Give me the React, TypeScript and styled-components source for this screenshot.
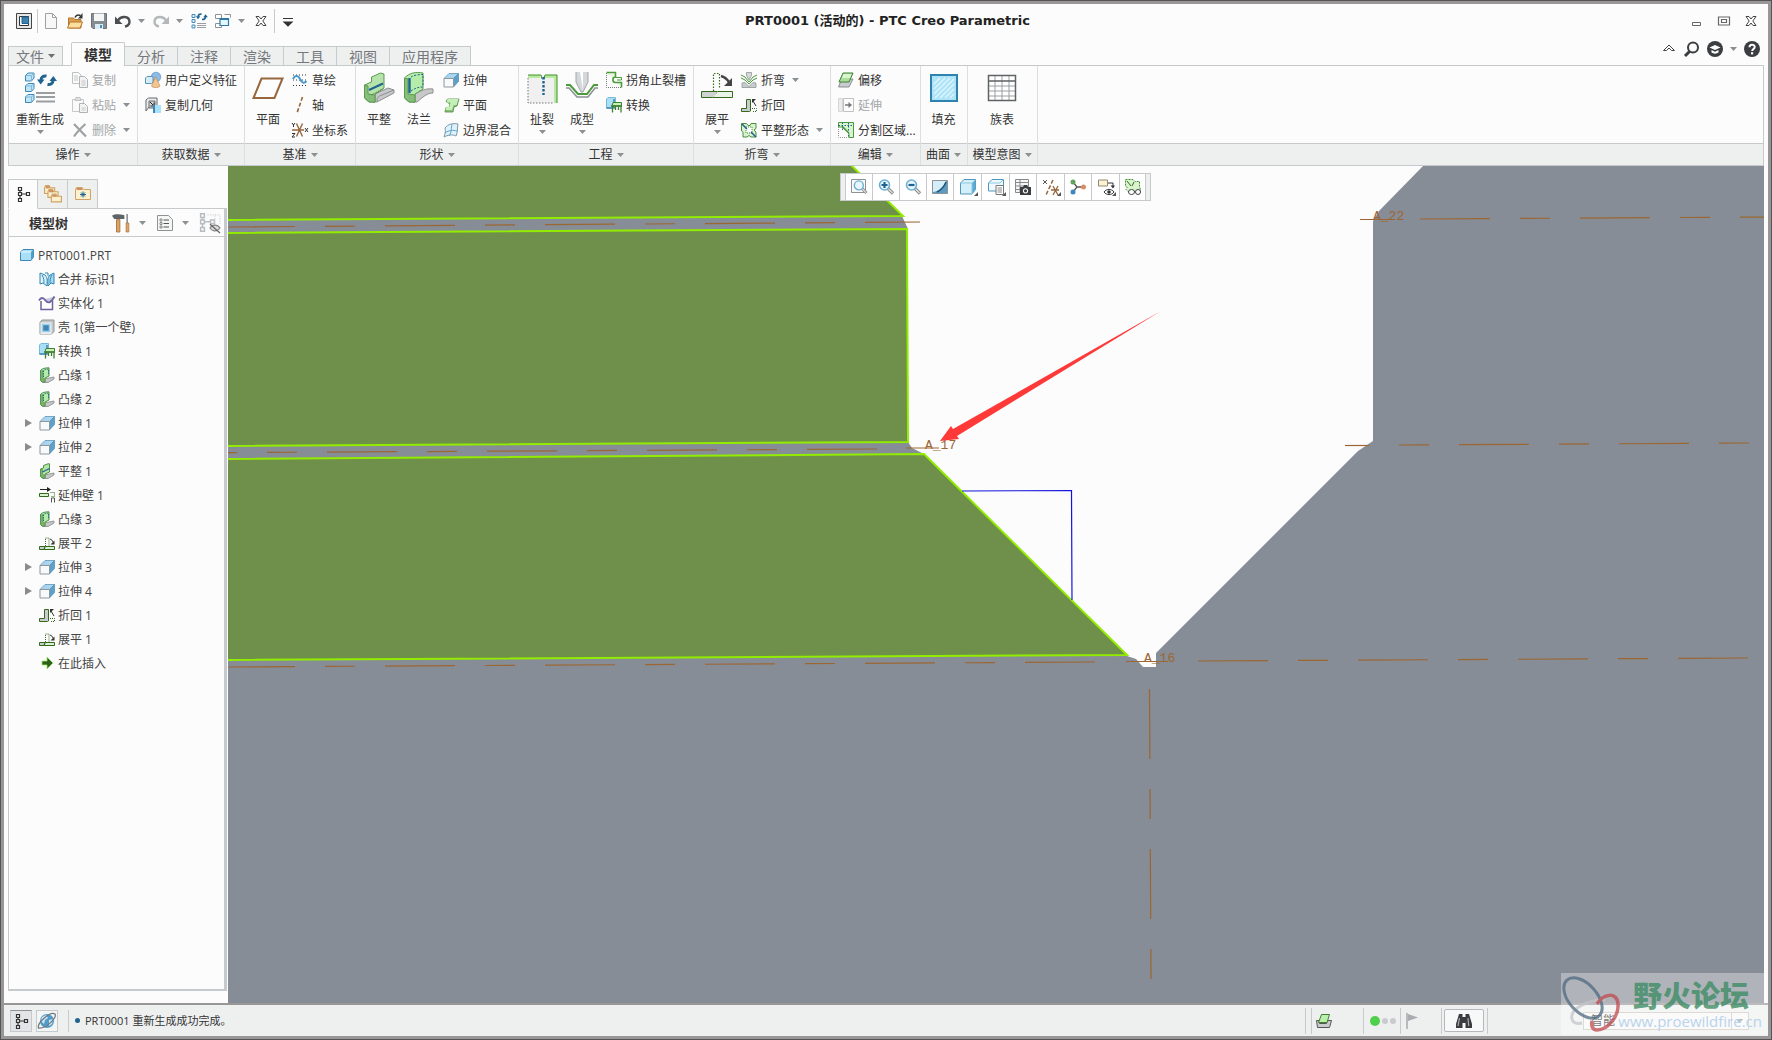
import React from "react";
import styled, { createGlobalStyle, css } from "styled-components";

const c = {
  page: "#fcfcfc",
  bar: "#eef0f0",
  line: "#c6cacd",
  soft: "#dcdfe0",
  text: "#333333",
  muted: "#a3a6a8",
  steel: "#868d96",
  green: "#6f904a",
  edge: "#92ec00",
  axis: "#9c6633",
  blue: "#1f6391",
};

const Global = createGlobalStyle`
  * { box-sizing: border-box; }
  body { margin: 0; background: ${c.page}; }
  body, button, select {
    font-family: "Open Sans", "Noto Sans CJK SC", sans-serif;
    font-size: 12px;
    color: ${c.text};
  }
  button { margin: 0; padding: 0; border: 0; background: none; }
  svg { display: block; flex: none; }
  ul { list-style: none; margin: 0; padding: 0; }
`;

/* ---------- icons ---------- */

const cube = (
  <>
    <path d="M1 6.500 6 1.500h9.500l-5 5z" fill="#a9d4ee" stroke="#5b95b8" strokeWidth=".8" />
    <path d="M10.500 6.500l5-5v8l-5 5.500z" fill="#5e9fc8" stroke="#5b95b8" strokeWidth=".8" />
    <path d="M1 6.500h9.500V15H1z" fill="#f8f9fa" stroke="#8f979c" />
  </>
);
const sphereBox = (x: number, y: number) => (
  <g key={`${x}-${y}`} transform={`translate(${x} ${y})`}>
    <path d="M.5 3 3 .5h6v5L6.500 8.500h-6z" fill="#bfe6f8" stroke="#3f86b3" />
    <path d="M.5 3h6v5.500M6.500 3 9 .5" fill="none" stroke="#7fb9d8" />
  </g>
);
const cycle = (
  <>
    <path d="M2 6C2 3 4.500 1.500 7.500 2" fill="none" stroke={c.blue} strokeWidth="3" />
    <path d="M-2 5.500h7.500L1.700 10.500z" fill={c.blue} />
    <path d="M14 6.500c0 3-2.500 4.500-5.500 4" fill="none" stroke={c.blue} strokeWidth="3" />
    <path d="M18 7h-7.500L14.300 2z" fill={c.blue} />
  </>
);
const lens = (
  <>
    <path d="M10 9.500l5 5" stroke="#8a8a8a" strokeWidth="3.200" />
    <path d="M10.500 10l4 4" stroke="#e4e4e4" strokeWidth="1.200" />
    <circle cx="6.500" cy="6" r="5" fill="#eaf6fd" stroke="#6db0d6" strokeWidth="1.600" />
  </>
);
const treeGlyph = (
  <path
    d="M3.500 1.500h3v3h-3zM3.500 6.500h3v3h-3zM3.500 12.500h3v3h-3zM11.500 6.500h3v3h-3zM5 4.500v2M5 9.500v3M6.500 8h5"
    fill="none"
    stroke="currentColor"
    strokeWidth="1.200"
  />
);
const flange = (
  <>
    <path d="M5 12l10-2v2l-6 3.500H4z" fill="#c6c8ca" stroke="#85898b" strokeWidth=".8" />
    <path d="M1.500 3.500C3 1.500 6 .8 10 .8V9l-4 2v4H3l-1.500-2z" fill="#b5ecaa" stroke="#4f9142" />
    <path d="M1.500 3.500 4 4v7.500l2 1V15H3l-1.500-2z" fill="#79b56c" stroke="#4f9142" strokeWidth=".6" />
    <path d="M4.500 3.500V11M5.500 3c1-.6 2.500-1 4-1v6" stroke={c.blue} strokeDasharray="1.500 1" fill="none" />
  </>
);
const flat = (
  <>
    <path d="M5 12l10-2v2l-6 3.500H4z" fill="#c6c8ca" stroke="#85898b" strokeWidth=".8" />
    <path d="M1.500 6l3-1V2.500L9 .8h1.500V9L6 11v4H3l-1.500-2z" fill="#b5e3ab" stroke="#4f9142" />
    <path d="M1.500 6 3.500 6.500v5l2.500 1V15H3l-1.500-2z" fill="#79b56c" stroke="#4f9142" strokeWidth=".6" />
    <path d="M3.500 9l7-3.500" stroke={c.blue} strokeWidth="1.300" />
  </>
);
const unbend = (
  <>
    <path d="M.5 11.500h5.500l-1 3H.5z" fill="#c9ccce" stroke="#34691c" />
    <path d="M6.500 11.500H15.500v3H5z" fill="#d9f2d3" stroke="#34691c" />
    <path d="M6.500 11V3h3.500v8" fill="none" stroke="#34691c" strokeDasharray="1 1" />
    <path d="M11 4c1.500.5 2.500 1.500 3 3" fill="none" stroke="#333" />
    <path d="M15.500 5.500v4h-4z" fill="#333" />
  </>
);
const bendBack = (
  <>
    <path d="M.5 11.500h5v-9h4V14l-1 .5h-8z" fill="#c9ccce" stroke="#34691c" />
    <path d="M11 11.500h4.500v3H11" fill="none" stroke="#34691c" strokeDasharray="1 1" />
    <path d="M12 4l3 5" stroke="#333" />
    <path d="M11 2h4l-4 4z" fill="#333" />
  </>
);
const convert = (
  <>
    <path d="M.5 2 2 .5h7.500V8L6 11H.5z" fill="#a9e0f7" stroke="#5fa9d3" strokeWidth=".8" />
    <path d="M8 2v9H.5" fill="none" stroke="#3f86b3" strokeWidth="1.500" />
    <path d="M7 5.500h8.500V9H6z" fill="#c5f0b8" stroke="#3f7f32" />
    <path d="M5 9h11M6.500 9v6.500M9.500 9v4M12.500 9v4M15 9v6.500" stroke="#3f7f32" strokeWidth="1.300" />
  </>
);
const xMark = (stroke: string) => (
  <path d="M3 3.500h3l2 2.500 2-2.500h3L9.800 8l3.200 4.500h-3L8 10l-2 2.500H3L6.200 8z" fill="#fff" stroke={stroke} />
);
const folder = (x: number, y: number, w: number, h: number) => (
  <g key={`${x}${y}`}>
    <path d={`M${x} ${y + 2}v${h - 2}h${w}V${y + 2}H${x + w * 0.55}L${x + w * 0.45} ${y}H${x + 1}z`} fill="#fdf1cd" stroke="#d0a265" />
    <path d={`M${x + 1} ${y + 1.5}h${w * 0.4}`} stroke="#cc8f62" strokeWidth="2" />
  </g>
);

const art: Record<string, React.ReactNode> = {
  app: (
    <>
      <path d="M.5.5h15v15H.5z" fill="#e8e8e8" stroke="#444" />
      <path d="M3.500 3.500h9v9h-9z" fill="#fff" stroke="#333" />
      <path d="M6 4h6.500v6.500H6z" fill="#3d7fad" stroke={c.blue} />
    </>
  ),
  file: <path d="M2.500.5h7l4 4v11h-11zM9.500.5v4h4" fill="#f7f7f7" stroke="#9ea1a3" />,
  open: (
    <>
      <path d="M1.500 5h5l1 1.500H14v8.500H1.500z" fill="#d9a054" stroke="#b9762c" />
      <path d="M.5 15 3 9h12.500L13 15z" fill="#fbdf9f" stroke="#b9762c" />
      <path d="M8 4.500C9 2 11 1.500 13.500 2.500" fill="none" stroke="#333" strokeWidth="1.500" />
      <path d="M15.500 0v5.500H11z" fill="#333" />
    </>
  ),
  save: (
    <>
      <path d="M.5.5h15v15H2l-1.500-1.500z" fill="#868d92" stroke="#6d7376" />
      <path d="M3 .5h10v7.500H3z" fill="#f4f5f5" />
      <path d="M4 11h8v5H4z" fill="#dcecf5" />
      <path d="M9 12h2v3H9z" fill="#4a8fb8" />
    </>
  ),
  undo: (
    <>
      <path d="M3 7.500C6 2.500 14 3 14.500 8.500c0 2.500-2 4.500-4.500 5" fill="none" stroke="#4b4f52" strokeWidth="2.400" />
      <path d="M0 3.500v7.500h7.500z" fill="#4b4f52" />
    </>
  ),
  redo: (
    <>
      <path d="M13 7.500C10 2.500 2 3 1.500 8.500c0 2.500 2 4.500 4.500 5" fill="none" stroke="#b4b8ba" strokeWidth="2.400" />
      <path d="M16 3.500v7.500H8.500z" fill="#b4b8ba" />
    </>
  ),
  regenSmall: (
    <>
      <path d="M1 1.500h3v3H1zM1 6.500h3v3H1zM1 12h3v3H1z" fill="#d7effa" stroke="#4b8fb9" />
      <path d="M6 10.500h9M6 12.500h9M6 14.500h9" stroke="#9a9ea0" />
      <g transform="translate(6 0) scale(.6)">{cycle}</g>
    </>
  ),
  windows: (
    <>
      <path d="M.5 1.500h6v4h-6zM9.500 1.500h6v3M.5 10.500h6v4h-6z" fill="#fff" stroke="#8e9295" />
      <path d="M5 5.500h8.500v7H5z" fill="#e6f6fd" stroke="#2f79a8" strokeWidth="1.200" />
      <path d="M5 6h8.500" stroke="#2f79a8" strokeWidth="2" />
    </>
  ),
  closeX: xMark("#444"),
  more: <path d="M3 5.500h10M4 9h8l-4 4z" stroke="#333" strokeWidth="1.200" fill="#333" />,
  min: <path d="M3.500 9.500h8v3h-8z" fill="#fff" stroke="#666" />,
  max: <path d="M2.500 4h11v8h-11zM5.500 6.500h5v3h-5z" fill="#fff" stroke="#666" strokeWidth="1.200" />,
  up: <path d="M2.500 9.500 8 4l5.500 5.500h-3L8 7l-2.500 2.500z" fill="#fff" stroke="#444" />,
  search: (
    <>
      <circle cx="9" cy="6.500" r="5" fill="none" stroke="#3b3e40" strokeWidth="2" />
      <path d="M5.500 10.500l-4.500 4.500" stroke="#3b3e40" strokeWidth="3" />
    </>
  ),
  learn: (
    <>
      <circle cx="8" cy="8" r="8" fill="#3b3e40" />
      <path d="M2.500 6.500 8 4l5.500 2.500L8 9zM4.500 9v2.500c2 1.500 5 1.500 7 0V9L8 10.800z" fill="#fff" />
    </>
  ),
  help: (
    <>
      <circle cx="8" cy="8" r="8" fill="#3b3e40" />
      <path d="M5.500 6.200C5.500 3 10.700 3 10.700 6c0 2-2.500 2-2.500 4" fill="none" stroke="#fff" strokeWidth="2" />
      <path d="M7 11.200h2.200v2.200H7z" fill="#fff" />
    </>
  ),
  regen: (
    <>
      {sphereBox(1, 0.5)}
      {sphereBox(1, 11)}
      {sphereBox(1, 22)}
      <g transform="translate(15 2)">{cycle}</g>
      <path d="M12 21h19M12 25h19M12 29.500h19" stroke="#9a9ea0" strokeWidth="2" />
    </>
  ),
  copy: (
    <>
      <path d="M.5.5h6l2.500 2.500v8.500H.5z" fill="#fafafa" stroke="#bfc2c3" />
      <path d="M7.500 4.500h5l3 3v8h-8z" fill="#f3f3f3" stroke="#b0b3b5" />
      <path d="M2 4h4M2 6h4M2 8h4M9.500 9h4M9.500 11h4M9.500 13h4" stroke="#c4c7c9" />
    </>
  ),
  paste: (
    <>
      <path d="M.5 2.500h11v12H.5z" fill="#fafafa" stroke="#c6c9ca" />
      <path d="M3 3.500h6l-1-3H4z" fill="#e0e2e3" stroke="#bfc2c3" />
      <path d="M7.500 6.500h5l3 3v6h-8z" fill="#f3f3f3" stroke="#b0b3b5" />
      <path d="M9.500 11h4M9.500 13h4" stroke="#c4c7c9" />
    </>
  ),
  del: <path d="M2 2l12 12.500M13.500 2C9 6 5 10 2 14.500" stroke="#9fa2a4" strokeWidth="2.200" fill="none" />,
  udf: (
    <>
      <circle cx="11" cy="5" r="4.800" fill="#8dbbe6" stroke="#5588bb" strokeWidth=".6" />
      <path d="M.5 6 2 4.500h6V10l-1.500 1.500h-6z" fill="#d4ecf7" stroke="#5b95b8" />
      <path d="M10.500 5l-4 9c1 2 7 2 8.500 0z" fill="#f2c694" stroke="#c78746" strokeWidth=".7" />
    </>
  ),
  copyGeom: (
    <>
      <path d="M1 3l2.500-2H12v9H4l-3 4z" fill="#eceeef" stroke="#63686b" />
      <path d="M4 4h6v7H4z" fill="#d5d8da" stroke="#63686b" />
      <path d="M5 5l3.500 3.500M9 5.500V9H5.500" stroke="#222" fill="none" />
      <path d="M8 8h8v8H8z" fill="#a8e2fa" />
      <path d="M8 8h2v8H8z" fill="#3f86b3" />
    </>
  ),
  plane: <path d="M9.500 6.500h21l-8 19.500h-21z" fill="#fdfdfd" stroke="#96663c" strokeWidth="2" />,
  sketch: (
    <>
      <path d="M1 3h14M1 8h14M1 13.500h14" stroke="#333" strokeWidth="1" strokeDasharray="1 2" />
      <path d="M1 7C3 3 6 3 8 7s4 5 6.500 2" fill="none" stroke="#4b9bd0" strokeWidth="2" />
    </>
  ),
  axis: <path d="M10.500 0 5 16" stroke="#96663c" strokeWidth="1.600" strokeDasharray="4 2" />,
  csys: (
    <>
      <path d="M0 8h12M4.500 1.500l6 13M10.500 1.500l-6 13" stroke="#96663c" strokeWidth="1.400" />
      <path d="M0 1l1.500 2L3 1M1.500 3v2M13 6l3 4M16 6l-3 4M0 11.500h3L0 15h3" stroke="#333" fill="none" />
    </>
  ),
  flatBig: (
    <>
      <path d="M12 22l13-6 6 2v3l-17 9H9z" fill="#c6c8ca" stroke="#8d9092" />
      <path d="M1.500 13l7-3V5l9-4 3.500 1v14l-9 6v8H6l-4.500-4z" fill="#b5e3ab" stroke="#5d9952" />
      <path d="M1.500 13l3.500 1v8l7 1v7H6l-4.500-4z" fill="#86bd7b" stroke="#5d9952" />
      <path d="M14 29c0-4 2-5 5-6l12-5" fill="none" stroke="#8d9092" />
      <path d="M6 18l14-6.500" stroke={c.blue} strokeWidth="2" />
      <path d="M8 23l12-6" stroke="#3b7f32" strokeDasharray="1 1" />
    </>
  ),
  flangeBig: (
    <>
      <path d="M12 22c5-3 11-6 18-5v4c-6 0-10 4-16 9H9z" fill="#c6c8ca" stroke="#8d9092" />
      <path d="M1.500 6C6 1 13-.5 20 1v16l-8 5v8H6l-4.500-4z" fill="#b5ecaa" stroke="#5d9952" />
      <path d="M1.500 6l3.500 1v15l7 1v7H6l-4.500-4z" fill="#86bd7b" stroke="#5d9952" />
      <path d="M6.500 6v15" stroke={c.blue} strokeWidth="2.400" />
      <path d="M8 5c3-2 8-2.500 12-2.500v12M8 19c4-3 8-4 12-4" fill="none" stroke={c.blue} strokeDasharray="2 1.500" />
    </>
  ),
  extrude: cube,
  planar: (
    <>
      <path d="M3 4.500 4.500 2H16l-2 7-3 1-1 5H2l1-4.500h3l1-3.500z" fill="#8dbb80" stroke="#4b8b3c" strokeWidth=".8" />
      <path d="M4.500 2H15.500l-2 6h-3l-1.500 5H2.500l1-3.500h3l1-4H3.500z" fill="#c3f0b6" />
    </>
  ),
  blend: (
    <>
      <path d="M2 6c3-4 8-5 13-4-1 4 0 8-2 12-4-2-8-1-12 1 1-3 2-6 1-9z" fill="#dff2fb" stroke="#7c97a8" />
      <path d="M9 2c-1 4 0 8-3 12M2 11c4-3 8-3 12-2" fill="none" stroke="#5fa4cb" />
    </>
  ),
  rip: (
    <>
      <path d="M2 3h28v28H2z" fill="#f0f0f0" />
      <path d="M2 3h12v3H2zM19 3h12v28h-3V6h-9z" fill="#b7ea9f" />
      <path d="M2 3h13l1 4M18 7l1-4h12v28" fill="none" stroke="#3f8f2c" />
      <path d="M2 6v25h26" fill="none" stroke="#777" strokeDasharray="1.500 1.500" />
      <path d="M17.500 5v18" stroke={c.blue} strokeWidth="2.400" strokeDasharray="2.500 1.500" />
    </>
  ),
  form: (
    <>
      <path d="M10 0h12v10l-5 10h-2l-5-10z" fill="#d5d8da" />
      <path d="M14 0h3v18z" fill="#fff" />
      <path d="M10 0v10l5 10h2l5-10V0" fill="none" stroke="#a2a6a8" />
      <path d="M0 13h4l8 9h9l7-9h4" fill="none" stroke="#4b9b3c" strokeWidth="2" />
      <path d="M0 16h3l8 9h11l7-9h3" fill="none" stroke="#8b8f92" strokeWidth="1.500" />
    </>
  ),
  relief: (
    <>
      <path d="M.5.5h9V5C6 5 6 10.500 9.500 10.500h6v5" fill="#e8f6e2" stroke="#4b9b3c" strokeWidth="1.600" />
      <path d="M.5 1v14.500H15" fill="none" stroke="#777" strokeDasharray="1 1" />
      <path d="M9.500 5.500h6V8h-4.500" fill="none" stroke="#4b9b3c" />
    </>
  ),
  convert,
  unbendBig: (
    <>
      <path d="M.5 19.500h16c-1 4-3 6-5 6H.5z" fill="#cfd2d3" stroke="#34691c" />
      <path d="M17 19.500h14.500v6H12" fill="#e9f4e6" stroke="#34691c" />
      <path d="M12.500 19V1.500h6V17" fill="none" stroke="#34691c" strokeWidth="1.200" strokeDasharray="1.500 1.500" />
      <path d="M20 4c4 1 6 3 8 6" fill="none" stroke="#444" strokeWidth="2.400" />
      <path d="M31 6v8h-8z" fill="#444" />
    </>
  ),
  bend: (
    <>
      <path d="M5.500.5h5v3L8 8 5.500 3.500z" fill="#d5d8da" stroke="#8f9496" strokeWidth=".8" />
      <path d="M0 3l4 2 4 5 4-5 4-2M0 6l4 2 4 4 4-4 4-2" fill="none" stroke="#4b9b3c" />
      <path d="M1 11v4.500h14V11l-3-.5-4 4-4-4z" fill="#c9ccce" stroke="#8f9496" strokeWidth=".8" />
    </>
  ),
  bendBack,
  flatState: (
    <>
      <path d="M.5 1.500h5l1.500 2h2l1-2h5v5l-2 1.500 2 2v5h-5l-2-1.500-2 1.500h-4v-4.500l-1.500-2L.5 9z" fill="#d8f3cd" stroke="#4b8b3c" />
      <path d="M5 5h6v6H5z" fill="#fff" stroke="#4b8b3c" strokeDasharray="1 1" />
      <path d="M1 2l5 5M10 10l5 5" stroke={c.blue} strokeWidth="1.500" />
    </>
  ),
  offset: (
    <>
      <path d="M3 9l3-2h9l-4 8H.5z" fill="#c9ccce" stroke="#8a8e90" />
      <path d="M5 1h10l-4 9H1z" fill="#a9dd9c" stroke="#3f7f32" />
      <path d="M5.500 2h8l-1.500 4h-8z" fill="#d9f5d0" />
    </>
  ),
  print: (
    <>
      <path d="M.5 7.500h4l-1 3h7l1-3h4l-2 7h-12z" fill="#c9ccce" stroke="#555" />
      <path d="M5.500 1.500h8l-2.500 8H2.500z" fill="#b9f0aa" stroke="#3f7f32" />
    </>
  ),
  extend: (
    <>
      <path d="M.5 1.500h4v13h-4z" fill="#ececec" stroke="#d4d6d7" />
      <path d="M5.500 1.500h10v13h-10z" fill="#fdfdfd" stroke="#bfc2c3" />
      <path d="M7 8h4" stroke="#777" strokeWidth="1.500" />
      <path d="M10.500 5v6l3.500-3z" fill="#777" />
    </>
  ),
  split: (
    <>
      <path d="M.5.5h15v15h-4.500v-4L4 5H.5z" fill="#d9f5d0" stroke="#4b9b3c" />
      <path d="M.5 3.500h15M4.500.5v8M10.500 1v14" stroke={c.blue} strokeDasharray="1.500 1.500" />
      <path d="M4.500 4.500l6.500 6.500" stroke="#4b9b3c" strokeWidth="1.300" />
      <path d="M.5 5v10.500h10" fill="none" stroke="#999" strokeDasharray="1 1" />
    </>
  ),
  fill: (
    <>
      <path d="M3 3h26v26H3z" fill="#aee4f8" stroke="#2d83ad" strokeWidth="2" />
      <path d="M6 12l6-6M6 17 17 6M6 22 22 6M7 26 26 7M12 26l14-14M17 26l9-9M22 26l4-4" stroke="#e0f5fd" strokeWidth="1.200" />
    </>
  ),
  table: (
    <>
      <path d="M2 3h28v26H2z" fill="#fff" />
      <path d="M2 14h28M2 19h28M2 24h28M9 3v26M16 3v26M23 3v26" stroke="#9a9ea0" />
      <path d="M2 9h28M2.500 3.500h27v25h-27z" fill="none" stroke="#5f6366" strokeWidth="1.500" />
    </>
  ),
  tree: treeGlyph,
  folders: (
    <>
      {folder(0.5, 0.5, 9, 7)}
      {folder(3.5, 4, 9, 7)}
      {folder(6.5, 8, 9, 7)}
    </>
  ),
  favorites: (
    <>
      {folder(0.5, 1.5, 15, 12)}
      <path d="M8 5.500v6M5 8.500h6M6 6.500l4 4M10 6.500l-4 4" stroke={c.blue} />
    </>
  ),
  tools: (
    <>
      <path d="M4 5h3v11H4z" fill="#dca368" stroke="#a8733c" strokeWidth=".8" />
      <path d="M0 1.500C3-.5 7 0 11 1v3.500H2z" fill="#5f6467" />
      <path d="M13.500 0v8" stroke="#8f9496" strokeWidth="1.500" />
      <path d="M12.500 8h2.500v8h-2.500z" fill="#dca368" stroke="#a8733c" strokeWidth=".6" />
    </>
  ),
  settings: (
    <>
      <path d="M.5.500h11l4 4v11H.5z" fill="#f4f5f5" stroke="#8e9295" />
      <path d="M6.500 5H12M6.500 8.500H12M6.500 12H12" stroke="#555" />
      <path d="M3 4h2v2H3zM3 7.500h2v2H3zM3 11h2v2H3z" fill="none" stroke="#777" strokeWidth=".8" />
    </>
  ),
  hideTree: (
    <>
      <g color="#b9bdbf" transform="translate(-3 -1)">{treeGlyph}</g>
      <path d="M6 1.500h10M12 2v8M16 2v8" stroke="#d6d8da" strokeDasharray="1 1" />
      <path d="M8 12c2-3 6-3 8 0-2 3-6 3-8 0z" fill="#ddd" stroke="#888" />
      <path d="M8 9l8 7" stroke="#666" />
    </>
  ),
  part: (
    <>
      <path d="M1.500 5 4 2.500h10.500V10L12 13.500H1.500z" fill="#a9e0f7" stroke="#3f86b3" />
      <path d="M12 5v8.500l2.500-3.500V2.500z" fill="#4f9ecb" />
      <path d="M1.500 5H12" stroke="#e6f8ff" />
    </>
  ),
  merge: (
    <>
      <path d="M1 2l5 2c3 3 2 7 2 11l-4-3-3 1z" fill="#dff2fb" stroke="#2f86b3" />
      <path d="M15 2l-4 2c-3 3-2 7-2 11l3-3 3 1z" fill="#a5d9f2" stroke="#2f86b3" />
      <path d="M3 4c2 3 2 6 2 8M13 4c-2 3-2 6-2 8M6 2h3v3" stroke="#2f86b3" fill="none" />
    </>
  ),
  solidify: (
    <>
      <path d="M2 6v8.500h11.500V6" fill="#fff" stroke="#6f629f" strokeWidth="1.500" />
      <path d="M0 5.500c2-3.500 4-3.500 6.500 0s6 2 9-4" fill="#c9ccdc" stroke="#6f629f" strokeWidth="1.800" />
    </>
  ),
  shell: (
    <>
      <path d="M1 3.500 3 1h12v11.500L12.500 15H1z" fill="#c3c7c9" stroke="#8f9496" />
      <path d="M1.500 3.500h11V15h-11z" fill="#eceeef" />
      <path d="M3.500 5.500h7v7h-7z" fill="#3f86b3" stroke="#9ccfe9" strokeWidth="1.500" />
    </>
  ),
  flange,
  flat,
  extendWall: (
    <>
      <path d="M.5 6.500h9v3h-9z" fill="#d8f3cd" stroke="#34691c" />
      <path d="M8 0v5l4-2.500z" fill="#222" />
      <path d="M1 2.500h8" stroke="#222" />
      <path d="M11.500 5.500h4v4h-4" fill="none" stroke="#34691c" strokeDasharray="1 1" />
      <path d="M12.500 11v4.500M15.500 11v4.500M12.500 11h3" stroke="#555" />
    </>
  ),
  unbend,
  insert: <path d="M3 6h5V2l6 6-6 6v-4H3z" fill="#2f5f1c" stroke="#9be86b" strokeWidth=".8" />,
  refit: (
    <>
      <path d="M.5.5h14v13H.5z" fill="#fafafa" stroke="#8e9295" />
      <g transform="translate(2 1) scale(.9)">{lens}</g>
    </>
  ),
  zoomIn: (
    <>
      {lens}
      <path d="M3.500 6h6M6.500 3v6" stroke={c.blue} strokeWidth="2.200" />
    </>
  ),
  zoomOut: (
    <>
      {lens}
      <path d="M3.500 6h6" stroke={c.blue} strokeWidth="2.200" />
    </>
  ),
  repaint: (
    <>
      <path d="M.5 1.500h15v13H.5z" fill="#5b9cc4" stroke="#8e9295" />
      <path d="M1 2h13C12 8 8 12 1 13z" fill="#d5effa" />
      <path d="M14 3C12 8 9 11 5 13" stroke="#1f5577" strokeWidth="1.500" fill="none" />
    </>
  ),
  shade: (
    <>
      <path d="M.5 4 4 .5h11.500v10L12 15H.5z" fill="#d2effa" stroke="#4f95bd" />
      <path d="M12 4v11l3.500-4.500V.5z" fill="#5fa9d3" />
      <path d="M.5 4H12v11" fill="none" stroke="#8fc9e5" />
    </>
  ),
  saved: (
    <>
      <path d="M.5 4 4 .5h11.500v8L12 12H.5z" fill="#eef9fd" stroke="#4f95bd" />
      <path d="M.5 4H12l3.500-3.500" fill="none" stroke="#8fc9e5" />
      <path d="M8 6.500h7.500v9H8z" fill="#fff" stroke="#777" />
      <path d="M9.500 9h4.500M9.500 11h4.500M9.500 13h4.500" stroke="#888" />
    </>
  ),
  camera: (
    <>
      <path d="M.5.5h13v13H.5zM.5 3.500h13M.5 7h13M.5 10.500h13M5 .5v13" fill="#f6f6f6" stroke="#85898b" />
      <path d="M5 8h3l1-2h3l1 2h3v8H5z" fill="#3b3e40" />
      <circle cx="10.500" cy="11.800" r="2.600" fill="#fff" />
      <circle cx="10.500" cy="11.800" r="1.600" fill="#3b3e40" />
    </>
  ),
  datum: (
    <>
      <path d="M0 1l4 4M4 1 0 5" stroke="#555" />
      <path d="M10 1 3 16" stroke="#96663c" strokeWidth="1.500" strokeDasharray="4 2" />
      <path d="M8 11h8M10 7l5 9M15 7l-5 9" stroke="#96663c" strokeWidth="1.300" />
    </>
  ),
  spin: (
    <>
      <path d="M3 3l4 5-4 5M7 8h6" stroke="#555" fill="none" strokeWidth="1.300" />
      <circle cx="3" cy="3" r="2.500" fill="#5fa35c" />
      <circle cx="3" cy="13" r="2.500" fill="#3f86c0" />
      <circle cx="13.500" cy="8" r="2.500" fill="#d98d66" />
    </>
  ),
  annot: (
    <>
      <path d="M.5 1h9v6h-9z" fill="#fdf3cf" stroke="#8d8a7a" />
      <path d="M10 4h5v4" fill="none" stroke="#333" />
      <path d="M12.500 6.500H17L15 9.500z" fill="#333" />
      <path d="M6 13c2.500-3.500 7.500-3.500 10 0-2.500 3.500-7.500 3.500-10 0z" fill="#fff" stroke="#333" />
      <circle cx="11" cy="13" r="1.800" fill="#333" />
    </>
  ),
  flatView: (
    <>
      <path d="M.5.5H8l2 2h4.500v5l1 3v2H3l-2-2 1-2-1.500-2z" fill="#d8f3cd" stroke="#3f8f2c" strokeDasharray="2 1" />
      <path d="M2 2l4 5M9 3 7 7" stroke="#34691c" />
      <path d="M3.500 13a3 2.500 0 1 0 6 0 3 2.500 0 1 0-6 0M10.500 13a2.500 2.500 0 1 0 5 0 2.500 2.500 0 1 0-5 0" fill="#fff" stroke="#444" />
    </>
  ),
  globe: (
    <>
      <circle cx="8" cy="8" r="7" fill="#4f9ccb" />
      <path d="M3 4l4-2 2 3-3 2-1 4-3-3zM10 7l4-1-1 5-3 2z" fill="#cfe6f3" />
      <path d="M-.5 15C-2 10 11-2 16 1c2 4-9 15-16.500 14z" fill="none" stroke="#74797c" strokeWidth="1.300" />
    </>
  ),
  flag: (
    <>
      <path d="M2 0v16" stroke="#a6a9ab" strokeWidth="1.500" />
      <path d="M3 1l10 3.500L3 8z" fill="#a9acae" />
    </>
  ),
  binoculars: (
    <>
      <path d="M3 1h3.500v3h3V1H13l3 10v4h-6.500v-5h-3v5H0v-4z" fill="#3a3d3f" />
      <path d="M3.500 5 2 13M12 5l.7 8" stroke="#aaa" strokeWidth="1.200" />
    </>
  ),
};

const Icon = ({ name, size = 16, grid = 16 }: { name: string; size?: number; grid?: number }) => (
  <svg width={size} height={size} viewBox={`0 0 ${grid} ${grid}`} overflow="visible" aria-hidden="true">
    {art[name]}
  </svg>
);

const Caret = ({ color = "#8b9093" }: { color?: string }) => (
  <svg width="7" height="4" viewBox="0 0 7 4" aria-hidden="true">
    <path d="M0 0h7L3.500 4z" fill={color} />
  </svg>
);

/* ---------- window frame ---------- */

const Frame = styled.div`
  display: flex;
  flex-direction: column;
  min-height: 100vh;
  border: 1px solid #555355;
  background: ${c.page};
  box-shadow: inset 0 0 0 3px #999698;
  padding: 3px;
`;

const TitleBar = styled.header`
  display: grid;
  grid-template-columns: 1fr auto 1fr;
  align-items: center;
  height: 33px;
  padding: 0 9px 0 12px;
`;

const Title = styled.h1`
  margin: 0;
  font: bold 13px/16px "DejaVu Sans", "Noto Sans CJK SC", sans-serif;
  color: #222;
`;

const Quick = styled.div`
  display: flex;
  align-items: center;
  gap: 8px;
`;

const Split = styled.button`
  display: flex;
  align-items: center;
  gap: 7px;
`;

const Rule = styled.span<{ $h: number; $mx?: number }>`
  width: 1px;
  height: ${(p) => p.$h}px;
  margin: 0 ${(p) => p.$mx ?? 0}px;
  background: ${c.line};
`;

const WindowButtons = styled.div`
  display: flex;
  justify-content: flex-end;
  gap: 11px;
`;

/* ---------- ribbon ---------- */

const TabRow = styled.nav`
  display: flex;
  align-items: flex-end;
  height: 28px;
  padding: 0 8px 0 4px;
`;

const Tab = styled.button<{ $active?: boolean }>`
  height: 19px;
  padding: 0 12px;
  border: 1px solid ${c.line};
  border-width: 1px 1px 0 0;
  background: ${c.bar};
  color: #74777b;
  font-size: 14px;
  line-height: 15px;
  white-space: nowrap;
  ${(p) =>
    p.$active &&
    css`
      position: relative;
      height: 24px;
      margin-bottom: -1px;
      border-width: 1px 1px 0 1px;
      border-radius: 2px 2px 0 0;
      background: ${c.page};
      color: #333;
      font-weight: bold;
      line-height: 20px;
    `}
`;

const FileTab = styled(Tab)`
  display: flex;
  align-items: center;
  gap: 4px;
  padding: 0 7px 0 7px;
  margin-right: 8px;
  border-left-width: 1px;
`;

const TabTools = styled.div`
  display: flex;
  align-items: center;
  gap: 7px;
  margin: 0 0 8px auto;
`;

const Ribbon = styled.section`
  display: flex;
  margin: 0 4px;
  border: 1px solid ${c.line};
`;

const Group = styled.div<{ $fill?: boolean }>`
  display: flex;
  flex-direction: column;
  flex: ${(p) => (p.$fill ? "1" : "none")};
  border-right: ${(p) => (p.$fill ? "0" : `1px solid ${c.soft}`)};
`;

const GroupBody = styled.div`
  display: flex;
  justify-content: center;
  height: 77px;
  padding: 0 3px;
`;

const GroupLabel = styled.button`
  display: flex;
  align-items: center;
  justify-content: center;
  gap: 4px;
  height: 22px;
  padding: 0 5px;
  border-top: 1px solid ${c.line};
  background: ${c.bar};
  line-height: 16px;
`;

const Large = styled.button<{ $wide?: boolean }>`
  display: flex;
  flex-direction: column;
  align-items: center;
  width: ${(p) => (p.$wide ? 56 : 40)}px;
  padding-top: 6px;
  white-space: nowrap;
  span {
    margin: 8px 0 2px;
    line-height: 16px;
  }
`;

const Stack = styled.div`
  display: flex;
  flex-direction: column;
  gap: 1px;
  padding-top: 2px;
`;

const Small = styled.button<{ $tight?: boolean }>`
  display: flex;
  align-items: center;
  gap: 4px;
  height: 24px;
  padding: 0 ${(p) => (p.$tight ? 1 : 4)}px 0 4px;
  white-space: nowrap;
  &:disabled {
    color: ${c.muted};
  }
  svg:nth-of-type(2) {
    margin-left: 3px;
  }
`;

type SmallItem = [icon: string, label: string, flags?: string];
type LargeItem = [icon: string, label: string, caret?: boolean];
interface GroupData {
  label: string;
  large?: LargeItem[];
  small?: SmallItem[];
}

const groups: GroupData[] = [
  {
    label: "操作",
    large: [["regen", "重新生成", true]],
    small: [
      ["copy", "复制", "off"],
      ["paste", "粘贴", "off menu"],
      ["del", "删除", "off menu"],
    ],
  },
  { label: "获取数据", small: [["udf", "用户定义特征"], ["copyGeom", "复制几何"]] },
  {
    label: "基准",
    large: [["plane", "平面"]],
    small: [["sketch", "草绘"], ["axis", "轴"], ["csys", "坐标系"]],
  },
  {
    label: "形状",
    large: [["flatBig", "平整"], ["flangeBig", "法兰"]],
    small: [["extrude", "拉伸"], ["planar", "平面"], ["blend", "边界混合"]],
  },
  {
    label: "工程",
    large: [["rip", "扯裂", true], ["form", "成型", true]],
    small: [["relief", "拐角止裂槽"], ["convert", "转换"]],
  },
  {
    label: "折弯",
    large: [["unbendBig", "展平", true]],
    small: [["bend", "折弯", "menu"], ["bendBack", "折回"], ["flatState", "平整形态", "menu"]],
  },
  {
    label: "编辑",
    small: [["offset", "偏移"], ["extend", "延伸", "off"], ["split", "分割区域...", "tight"]],
  },
  { label: "曲面", large: [["fill", "填充"]] },
  { label: "模型意图", large: [["table", "族表"]] },
];

const RibbonGroup = ({ label, large = [], small = [] }: GroupData) => (
  <Group>
    <GroupBody>
      {large.map(([icon, text, caret]) => (
        <Large key={text} $wide={text.length > 2}>
          <Icon name={icon} size={32} grid={32} />
          <span>{text}</span>
          {caret && <Caret />}
        </Large>
      ))}
      {small.length > 0 && (
        <Stack>
          {small.map(([icon, text, flags = ""]) => (
            <Small key={text} disabled={flags.includes("off")} $tight={flags.includes("tight")}>
              <Icon name={icon} />
              {text}
              {flags.includes("menu") && <Caret />}
            </Small>
          ))}
        </Stack>
      )}
    </GroupBody>
    <GroupLabel>
      {label}
      <Caret />
    </GroupLabel>
  </Group>
);

const LabelFill = styled.div`
  height: 22px;
  border-top: 1px solid ${c.line};
  background: ${c.bar};
`;

/* ---------- model tree ---------- */

const Workspace = styled.main`
  display: flex;
  flex: 1;
  padding-right: 4px;
`;

const Side = styled.aside`
  display: flex;
  flex-direction: column;
  width: 224px;
  padding: 13px 1px 12px 4px;
`;

const SideTabs = styled.div`
  display: flex;
  height: 30px;
  margin-bottom: -1px;
`;

const SideTab = styled.button<{ $active?: boolean }>`
  display: grid;
  place-items: center;
  width: 30px;
  position: relative;
  border: 1px solid ${c.line};
  border-left-width: ${(p) => (p.$active ? 1 : 0)}px;
  border-bottom-color: ${(p) => (p.$active ? c.page : c.line)};
  background: ${(p) => (p.$active ? c.page : c.bar)};
`;

const Panel = styled.section`
  flex: 1;
  border: 1px solid ${c.line};
  border-width: 1px 3px 2px 1px;
`;

const PanelHead = styled.div`
  display: flex;
  align-items: center;
  height: 28px;
  padding: 0 4px 0 20px;
  border-bottom: 1px solid ${c.line};
  h2 {
    margin: 0 auto 0 0;
    font-size: 13px;
    line-height: 20px;
  }
`;

const HeadTools = styled.div`
  display: flex;
  align-items: center;
  gap: 11px;
  button {
    gap: 9px;
  }
`;

const Tree = styled.ul`
  padding-top: 6px;
`;

const Node = styled.li<{ $root?: boolean }>`
  display: flex;
  align-items: center;
  height: 24px;
  padding-left: ${(p) => (p.$root ? 10 : 16)}px;
`;

const NodeButton = styled.button`
  display: flex;
  align-items: center;
  gap: 3px;
  white-space: nowrap;
  color: #444;
`;

const Twist = styled.button`
  width: 14px;
  height: 16px;
  display: flex;
  align-items: center;
`;

const nodes: [icon: string, label: string, open?: boolean][] = [
  ["merge", "合并 标识1"],
  ["solidify", "实体化 1"],
  ["shell", "壳 1(第一个壁)"],
  ["convert", "转换 1"],
  ["flange", "凸缘 1"],
  ["flange", "凸缘 2"],
  ["extrude", "拉伸 1", true],
  ["extrude", "拉伸 2", true],
  ["flat", "平整 1"],
  ["extendWall", "延伸壁 1"],
  ["flange", "凸缘 3"],
  ["unbend", "展平 2"],
  ["extrude", "拉伸 3", true],
  ["extrude", "拉伸 4", true],
  ["bendBack", "折回 1"],
  ["unbend", "展平 1"],
  ["insert", "在此插入"],
];

/* ---------- graphics area ---------- */

const Viewport = styled.section`
  position: relative;
  flex: 1;
  min-width: 0;
  background: ${c.page};
  overflow: hidden;
`;

const Scene = styled.svg`
  position: absolute;
  inset: 0;
  width: 100%;
  height: 100%;
  text {
    font: 13px "Liberation Mono", monospace;
    fill: ${c.axis};
  }
`;

const ViewTools = styled.div`
  position: absolute;
  top: 7px;
  left: 612px;
  display: flex;
  height: 28px;
  border: 1px solid ${c.line};
  background: ${c.bar};
  padding: 0 4px;
`;

const ViewTool = styled.button<{ $menu?: boolean }>`
  display: grid;
  place-items: center;
  position: relative;
  width: ${(p) => (p.$menu ? 28 : 27)}px;
  border-left: 1px solid ${c.line};
  background: #fff;
  &:last-child {
    border-right: 1px solid ${c.line};
  }
  ${(p) =>
    p.$menu &&
    css`
      &::after {
        content: "";
        position: absolute;
        right: 3px;
        bottom: 4px;
        border: 2px solid #555;
        border-top-color: transparent;
        border-left-color: transparent;
      }
    `}
`;

const viewTools: [string, string, boolean?][] = [
  ["refit", "重新调整"],
  ["zoomIn", "放大"],
  ["zoomOut", "缩小"],
  ["repaint", "重画"],
  ["shade", "显示样式", true],
  ["saved", "已保存方向", true],
  ["camera", "视图管理器"],
  ["datum", "基准显示", true],
  ["spin", "旋转中心"],
  ["annot", "注释显示", true],
  ["flatView", "平整预览"],
];

const axes: [string, string][] = [
  ["M225 227 920 222", "70 30 30 30"],
  ["M167 453 877 449", "70 30 30 30"],
  ["M906 448H939", ""],
  ["M225 667 1096 662", "70 30 30 30"],
  ["M1126 661.500H1168", ""],
  ["M1198 661 1749 658", "70 30 30 30"],
  ["M1360 219.500H1395", ""],
  ["M1420 219 1770 217", "70 30 30 30"],
  ["M1345 445.500H1369", ""],
  ["M1399 445 1750 443", "30 30 70 30"],
  ["M1149.500 689 1151 980", "70 30 30 30"],
];

const Model = () => (
  <Scene viewBox="228 166 1536 837" preserveAspectRatio="xMinYMin slice" aria-label="PRT0001">
    <path
      d="M228 216H902L908 229V442L912 448 924 454 1127 656 1136 659 1143 667H1156V653L1358 451 1373 441V221L1379 211 1423 166H1764V1003H228z"
      fill={c.steel}
    />
    <g fill={c.green} stroke={c.edge} strokeWidth="2">
      <path d="M226 164H850L903 216 226 220z" />
      <path d="M226 233 907 229 908 442 226 446z" />
      <path d="M226 459 924 454 1127 655 226 660z" />
    </g>
    <g stroke={c.axis} strokeWidth="1.200" fill="none">
      {axes.map(([d, dash]) => (
        <path key={d} d={d} strokeDasharray={dash || undefined} />
      ))}
    </g>
    <path d="M962 491 1071.500 490.500 1072 600" fill="none" stroke="#1414dc" strokeWidth="1.200" />
    <text x="925" y="449">A_17</text>
    <text x="1373" y="220">A_22</text>
    <text x="1144" y="662">A_16</text>
    <path d="M940 441 951 426 953 429 1161 311 957 436 959 439z" fill="#ff3838" />
  </Scene>
);

/* ---------- status bar ---------- */

const Status = styled.footer`
  position: relative;
  display: flex;
  align-items: center;
  height: 33px;
  padding: 0 6px;
  border-top: 2px solid #999698;
  background: ${c.bar};
`;

const StatusButton = styled.button<{ $on?: boolean }>`
  display: grid;
  place-items: center;
  width: 22px;
  height: 22px;
  margin-right: 4px;
  border: 1px solid ${c.line};
  border-top-color: ${(p) => (p.$on ? "#8e9295" : c.line)};
  background: ${(p) => (p.$on ? "#e2e4e5" : "#f4f5f5")};
`;

const Message = styled.output`
  display: flex;
  align-items: center;
  gap: 5px;
  margin: 0 auto 0 0;
  font-size: 11px;
  line-height: 16px;
  &::before {
    content: "";
    width: 5px;
    height: 5px;
    border-radius: 50%;
    background: ${c.blue};
  }
`;

const Cell = styled.div<{ $w: number }>`
  display: flex;
  align-items: center;
  gap: 2px;
  width: ${(p) => p.$w}px;
  height: 26px;
  padding-left: 4px;
  border-left: 1px solid ${c.line};
`;

const Dots = styled(Cell)`
  padding-left: 6px;
`;

const Dot = styled.span<{ $on?: boolean }>`
  flex: none;
  width: ${(p) => (p.$on ? 10 : 6)}px;
  height: ${(p) => (p.$on ? 10 : 6)}px;
  border-radius: 50%;
  background: ${(p) => (p.$on ? "#4fd04a" : "#c9cbcd")};
`;

const FindButton = styled.button`
  display: grid;
  place-items: center;
  width: 40px;
  height: 23px;
  margin-left: -2px;
  border: 1px solid #b5b9bc;
  border-radius: 2px;
  background: #f7f8f8;
`;

const Filter = styled.label`
  display: flex;
  align-items: center;
  width: 166px;
  height: 18px;
  margin: 0 13px 0 91px;
  border: 1px solid #cfc6be;
  background: #f8f8f8;
  svg {
    margin-right: 5px;
  }
`;

const FilterSelect = styled.select`
  flex: 1;
  height: 16px;
  padding: 0 7px;
  border: 0;
  border-right: 1px solid #cfc6be;
  margin-right: 4px;
  background: none;
  appearance: none;
  line-height: 16px;
`;

const Watermark = styled.div`
  position: absolute;
  right: 0;
  bottom: 1px;
  width: 207px;
  height: 62px;
  background: rgba(255, 255, 255, 0.35);
  pointer-events: none;
  svg {
    position: absolute;
    left: 0;
    top: 0;
  }
`;

const MarkText = styled.div`
  display: flex;
  flex-direction: column;
  align-items: flex-end;
  padding: 4px 6px 0 0;
  strong {
    padding-right: 13px;
    font: 900 29px/34px "Noto Sans CJK SC", sans-serif;
    color: rgba(60, 140, 100, 0.8);
  }
  span {
    font: 15px/20px "Open Sans", sans-serif;
    color: #b9d3ea;
  }
`;

const Tool = ({ name, label, menu }: { name: string; label: string; menu?: boolean }) => (
  <Split aria-label={label}>
    <Icon name={name} />
    {menu && <Caret />}
  </Split>
);

export default function App() {
  return (
    <>
      <Global />
      <Frame>
        <TitleBar>
          <Quick>
            <Tool name="app" label="窗口" />
            <Rule $h={24} $mx={-3} />
            <Tool name="file" label="新建" />
            <Tool name="open" label="打开" />
            <Tool name="save" label="保存" />
            <Tool name="undo" label="撤消" menu />
            <Tool name="redo" label="重做" menu />
            <Tool name="regenSmall" label="重新生成" />
            <Tool name="windows" label="窗口列表" menu />
            <Tool name="closeX" label="关闭" />
            <Rule $h={24} $mx={-3} />
            <Tool name="more" label="自定义" />
          </Quick>
          <Title>PRT0001 (活动的) - PTC Creo Parametric</Title>
          <WindowButtons>
            <Tool name="min" label="最小化" />
            <Tool name="max" label="最大化" />
            <Tool name="closeX" label="关闭窗口" />
          </WindowButtons>
        </TitleBar>

        <TabRow>
          <FileTab>
            文件
            <Caret color="#6d7073" />
          </FileTab>
          <Tab $active>模型</Tab>
          {["分析", "注释", "渲染", "工具", "视图", "应用程序"].map((t) => (
            <Tab key={t}>{t}</Tab>
          ))}
          <TabTools>
            <Tool name="up" label="最小化功能区" />
            <Tool name="search" label="搜索" />
            <Tool name="learn" label="学习" menu />
            <Tool name="help" label="帮助" />
          </TabTools>
        </TabRow>

        <Ribbon>
          {groups.map((g) => (
            <RibbonGroup key={g.label} {...g} />
          ))}
          <Group $fill>
            <GroupBody />
            <LabelFill />
          </Group>
        </Ribbon>

        <Workspace>
          <Side>
            <SideTabs>
              <SideTab $active aria-label="模型树">
                <Icon name="tree" />
              </SideTab>
              <SideTab aria-label="文件夹">
                <Icon name="folders" size={18} />
              </SideTab>
              <SideTab aria-label="收藏夹">
                <Icon name="favorites" />
              </SideTab>
            </SideTabs>
            <Panel>
              <PanelHead>
                <h2>模型树</h2>
                <HeadTools>
                  <Split aria-label="设置">
                    <Icon name="tools" size={18} />
                    <Caret />
                  </Split>
                  <Split aria-label="显示">
                    <Icon name="settings" />
                    <Caret />
                  </Split>
                  <Split aria-label="隐藏">
                    <Icon name="hideTree" size={20} />
                  </Split>
                </HeadTools>
              </PanelHead>
              <Tree>
                <Node $root>
                  <NodeButton>
                    <Icon name="part" />
                    PRT0001.PRT
                  </NodeButton>
                </Node>
                {nodes.map(([icon, label, open]) => (
                  <Node key={label}>
                    <Twist as={open ? "button" : "span"}>
                      {open && (
                        <svg width="7" height="8" viewBox="0 0 7 8" aria-hidden="true">
                          <path d="M0 0v8l7-4z" fill="#8a8d8f" />
                        </svg>
                      )}
                    </Twist>
                    <NodeButton>
                      <Icon name={icon} />
                      {label}
                    </NodeButton>
                  </Node>
                ))}
              </Tree>
            </Panel>
          </Side>
          <Viewport>
            <Model />
            <ViewTools>
              {viewTools.map(([icon, label, menu]) => (
                <ViewTool key={icon} aria-label={label} $menu={menu}>
                  <Icon name={icon} />
                </ViewTool>
              ))}
            </ViewTools>
          </Viewport>
        </Workspace>

        <Status>
          <StatusButton $on aria-label="模型树">
            <Icon name="tree" />
          </StatusButton>
          <StatusButton aria-label="浏览器">
            <Icon name="globe" />
          </StatusButton>
          <Rule $h={22} $mx={6} />
          <Message>PRT0001 重新生成成功完成。</Message>
          <Cell $w={6} />
          <Cell $w={52}>
            <Icon name="print" />
          </Cell>
          <Dots $w={37}>
            <Dot $on />
            <Dot />
            <Dot />
          </Dots>
          <Cell $w={41}>
            <Icon name="flag" />
          </Cell>
          <Cell $w={46}>
            <FindButton aria-label="查找">
              <Icon name="binoculars" />
            </FindButton>
          </Cell>
          <Cell $w={5} />
          <Filter>
            <FilterSelect aria-label="过滤器" defaultValue="智能">
              <option>智能</option>
            </FilterSelect>
            <Caret />
          </Filter>
          <Watermark>
            <svg width="207" height="62" viewBox="0 0 207 62" aria-hidden="true">
              <g fill="none" opacity=".75">
                <path d="M44 27C28 26 8 36 11 46c1 4 5 5 10 4" stroke="#c3c5c8" strokeWidth="3" />
                <ellipse cx="22" cy="25" rx="14" ry="24" transform="rotate(-42 22 25)" stroke="#4f6a80" strokeWidth="3" />
                <path d="M36 31c6-10 20-13 21 0 1 12-10 26-21 26-5 0-6-5-5-9" stroke="#c14a4f" strokeWidth="3.500" />
              </g>
            </svg>
            <MarkText>
              <strong>野火论坛</strong>
              <span>www.proewildfire.cn</span>
            </MarkText>
          </Watermark>
        </Status>
      </Frame>
    </>
  );
}
